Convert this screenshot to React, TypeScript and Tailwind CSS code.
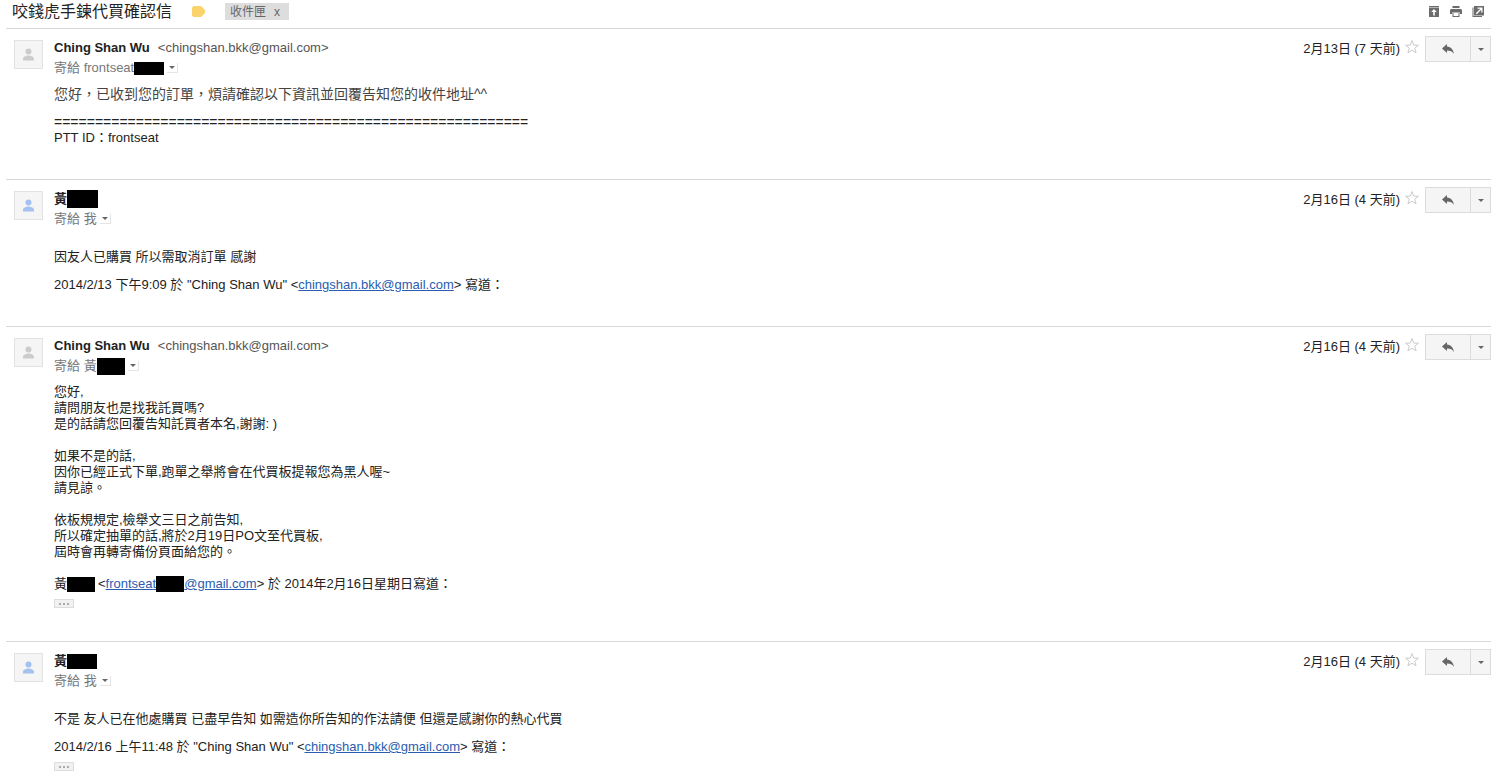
import React from 'react';

interface MessageProps {
  name: React.ReactNode;
  email?: string;
  recipient: React.ReactNode;
  date: string;
  avatarColor: string;
  children: React.ReactNode;
}

function Redacted({ className }: { className: string }) {
  return <span className={`inline-block bg-black ${className}`} />;
}

function Avatar({ color }: { color: string }) {
  return (
    <div className={`mt-1 mr-[11px] size-[29px] shrink-0 border border-[#e2e2e2] bg-[#f5f5f5] ${color}`}>
      <svg viewBox="0 0 27 27" className="size-full" fill="currentColor">
        <circle cx="13.5" cy="10.5" r="3" />
        <path d="M8 19.5v-1.7c0-2 3.3-3.3 5.5-3.3s5.5 1.3 5.5 3.3v1.7z" />
      </svg>
    </div>
  );
}

function Caret() {
  return (
    <svg viewBox="0 0 6 3" className="h-[3px] w-[6px]" fill="#666">
      <path d="M0 0h6L3 3z" />
    </svg>
  );
}

function TrimmedButton() {
  return (
    <button
      aria-label="顯示裁剪內容"
      className="mt-[7px] flex h-[9px] w-5 items-center justify-center border border-[#ddd] bg-[#f1f1f1]"
    >
      <svg viewBox="0 0 10 2" className="h-[2px] w-[10px]" fill="#aaa">
        <path d="M0 0h2v2H0zM4 0h2v2H4zM8 0h2v2H8z" />
      </svg>
    </button>
  );
}

function MailLink({ href, children }: { href: string; children: React.ReactNode }) {
  return (
    <a href={href} className="text-[#2a5db0] underline">
      {children}
    </a>
  );
}

function Message({ name, email, recipient, date, avatarColor, children }: MessageProps) {
  return (
    <article className="flex items-start border-t border-[#d8d8d8] pt-[7px] pb-[33px] pl-2 last:pb-2">
      <Avatar color={avatarColor} />
      <div className="min-w-0 flex-1">
        <header className="flex items-start">
          <div className="mt-[2px] flex-1">
            <div className="flex h-5 items-center leading-5">
              <span className="flex items-center font-bold text-[#222]">{name}</span>
              {email && <span className="ml-2 text-[#555]">&lt;{email}&gt;</span>}
            </div>
            <div className="flex h-5 items-center leading-5 text-[#777]">
              寄給&nbsp;{recipient}
              <button
                aria-label="顯示詳細資料"
                className="ml-[3px] flex h-[10px] w-[11px] items-center justify-center border-r border-b border-[#e5e5e5]"
              >
                <Caret />
              </button>
            </div>
          </div>
          <time className="mt-[3px] leading-5 text-[#222]">{date}</time>
          <button aria-label="加上星號" className="mt-[3px] ml-1 size-4">
            <svg viewBox="0 0 16 16" className="size-full" fill="none" stroke="#ccc">
              <path d="M8 1.5l1.7 4.6 4.8.1-3.8 3 1.4 4.7L8 11.2l-4.1 2.7 1.4-4.7-3.8-3 4.8-.1z" />
            </svg>
          </button>
          <div className="ml-[5px] flex h-[26px] border border-[#dcdcdc] bg-[#f5f5f5]">
            <button aria-label="回覆" className="flex w-11 items-center justify-center">
              <svg viewBox="0 0 12 10" className="h-[10px] w-3" fill="#666">
                <path d="M5 0v2.6c4 .4 6.3 2.9 7 7.4-1.7-2.5-3.7-3.4-7-3.4V9L0 4.500z" />
              </svg>
            </button>
            <button aria-label="更多" className="flex w-5 items-center justify-center border-l border-[#dcdcdc]">
              <Caret />
            </button>
          </div>
        </header>
        <div className="leading-4 text-[#222]">{children}</div>
      </div>
    </article>
  );
}

function App() {
  return (
    <main
      lang="zh-Hant"
      className="bg-white pr-[13px] pl-[6px] font-['Liberation_Sans','Noto_Sans_CJK_TC',sans-serif] text-[13px]"
    >
      {/* Subject and label */}
      <div className="flex h-7 items-start pl-[6px]">
        <h1 className="text-[16px] leading-6 text-[#222]">咬錢虎手鍊代買確認信</h1>
        <button aria-label="重要郵件" className="mt-[6px] ml-5">
          <svg viewBox="0 0 13 11" className="h-[11px] w-[13px]" fill="#fbd36b">
            <path d="M1.5 0H9l4 4v3L9 11H1.5L0 9.5v-8z" />
          </svg>
        </button>
        <span className="mt-[3px] ml-5 flex h-[17px] items-center bg-[#ddd] px-[5px] text-[12px] leading-4 text-[#666]">
          收件匣
          <button aria-label="移除標籤" className="ml-1 px-1">x</button>
        </span>
        <div className="mt-[6px] mr-[7px] ml-auto flex gap-[10px] text-[#6b6b6b]">
          <button aria-label="展開">
            <svg viewBox="0 0 12 12" className="size-3" fill="currentColor">
              <path d="M1 0h10v1H1z" />
              <path
                d="M1 1.5h10V11H1zM6 3L3.200 6h2v3.500h1.600V6h2z"
                fillRule="evenodd"
              />
            </svg>
          </button>
          <button aria-label="列印">
            <svg viewBox="0 0 12 12" className="size-3" fill="currentColor">
              <path d="M2.5 0h7v2h-7z" />
              <path d="M1 3h10l1 1v4h-2V6.500H2V8H0V4z" />
              <path d="M2.500 7h7v4h-7zM3.500 7v3h5V7z" fillRule="evenodd" />
            </svg>
          </button>
          <button aria-label="在新視窗中開啟">
            <svg viewBox="0 0 12 12" className="size-3" fill="currentColor">
              <path d="M.5 1.500h1V10H10v1H.5z" />
              <path
                d="M2 0h10v9.500H2zM5.500 1.500v1.300h2.800L3.800 7.200l1 1L9.200 3.800v2.700h1.300v-5z"
                fillRule="evenodd"
              />
            </svg>
          </button>
        </div>
      </div>

      <Message
        name="Ching Shan Wu"
        email="chingshan.bkk@gmail.com"
        recipient={<>frontseat<Redacted className="h-[13px] w-[30px]" /></>}
        date="2月13日 (7 天前)"
        avatarColor="text-[#ccc]"
      >
        <p className="mt-2 text-[14px] text-[#444]">您好，已收到您的訂單，煩請確認以下資訊並回覆告知您的收件地址^^</p>
        <p className="mt-3 text-[14px]">==========================================================</p>
        <p>PTT ID：frontseat</p>
      </Message>

      <Message
        name={<>黃<Redacted className="h-[18px] w-[31px]" /></>}
        recipient="我"
        date="2月16日 (4 天前)"
        avatarColor="text-[#a4c2f0]"
      >
        <p className="mt-5">因友人已購買 所以需取消訂單 感謝</p>
        <p className="mt-3">
          2014/2/13 下午9:09 於 "Ching Shan Wu" &lt;
          <MailLink href="mailto:chingshan.bkk@gmail.com">chingshan.bkk@gmail.com</MailLink>&gt; 寫道：
        </p>
      </Message>

      <Message
        name="Ching Shan Wu"
        email="chingshan.bkk@gmail.com"
        recipient={<>黃<Redacted className="h-[17px] w-[28px]" /></>}
        date="2月16日 (4 天前)"
        avatarColor="text-[#ccc]"
      >
        <div className="mt-2 space-y-4">
          <p>
            您好,<br />
            請問朋友也是找我託買嗎?<br />
            是的話請您回覆告知託買者本名,謝謝: )
          </p>
          <p>
            如果不是的話,<br />
            因你已經正式下單,跑單之舉將會在代買板提報您為黑人喔~<br />
            請見諒。
          </p>
          <p>
            依板規規定,檢舉文三日之前告知,<br />
            所以確定抽單的話,將於2月19日PO文至代買板,<br />
            屆時會再轉寄備份頁面給您的。
          </p>
          <p className="flex items-center">
            黃<Redacted className="mr-[3px] h-[15px] w-[28px]" />&lt;
            <a href="mailto:frontseat@gmail.com" className="flex items-center text-[#2a5db0] underline">
              frontseat<Redacted className="h-4 w-[28px]" />@gmail.com
            </a>
            &gt; 於 2014年2月16日星期日寫道：
          </p>
        </div>
        <TrimmedButton />
      </Message>

      <Message
        name={<>黃<Redacted className="h-[15px] w-[30px]" /></>}
        recipient="我"
        date="2月16日 (4 天前)"
        avatarColor="text-[#a4c2f0]"
      >
        <p className="mt-5">不是 友人已在他處購買 已盡早告知 如需造你所告知的作法請便 但還是感謝你的熱心代買</p>
        <p className="mt-3">
          2014/2/16 上午11:48 於 "Ching Shan Wu" &lt;
          <MailLink href="mailto:chingshan.bkk@gmail.com">chingshan.bkk@gmail.com</MailLink>&gt; 寫道：
        </p>
        <TrimmedButton />
      </Message>
    </main>
  );
}

export default App;
